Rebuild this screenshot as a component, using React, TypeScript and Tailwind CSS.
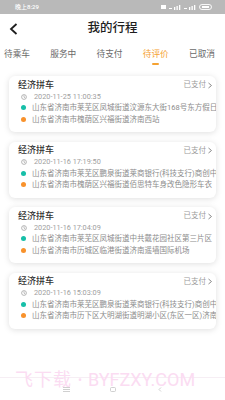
import React from "react";

const trips = [
  {
    time: "2020-11-25 11:00:35",
    from: "山东省济南市莱芜区凤城街道汶源东大街168号东方假日",
    to: "山东省济南市槐荫区兴福街道济南西站",
  },
  {
    time: "2020-11-16 17:19:50",
    from: "山东省济南市莱芜区鹏泉街道莱商银行(科技支行)商创中",
    to: "山东省济南市槐荫区兴福街道佰思特车身改色隐形车衣",
  },
  {
    time: "2020-11-16 17:04:09",
    from: "山东省济南市莱芜区凤城街道中共戴花园社区第三片区",
    to: "山东省济南市历城区临港街道济南遥墙国际机场",
  },
  {
    time: "2020-11-16 15:03:09",
    from: "山东省济南市莱芜区鹏泉街道莱商银行(科技支行)商创中",
    to: "山东省济南市历下区大明湖街道明湖小区(东区一区)济南",
  },
];

const tabs = ["待乘车", "服务中", "待支付", "待评价", "已取消"];

function Clock() {
  return (
    <svg width="6" height="6" viewBox="0 0 12 12" className="shrink-0">
      <circle cx="6" cy="6" r="4.8" fill="none" stroke="#9a9a9a" strokeWidth="1.4" />
      <path d="M6 3.4V6.2L7.8 7.4" fill="none" stroke="#9a9a9a" strokeWidth="1.3" strokeLinecap="round" />
    </svg>
  );
}

function Card({ t }: { t: (typeof trips)[number] }) {
  return (
    <div className="h-[56px] w-[207px] shrink-0 overflow-hidden rounded-[6px] bg-white pt-[3px] shadow-[0_1px_6px_rgba(0,0,0,0.13)]">
      <div className="flex h-[12px] items-center justify-between pl-[9px] pr-[3px]">
        <span className="text-[9px] font-medium leading-none text-[#333333]">经济拼车</span>
        <span className="flex items-center text-[7.5px] leading-none text-[#9b9b9b]">
          已支付
          <svg width="6" height="7" viewBox="0 0 6 7" className="ml-[1px]">
            <path d="M1.5 1L4.5 3.5L1.5 6" fill="none" stroke="#8a8a8a" strokeWidth="1" />
          </svg>
        </span>
      </div>
      <div className="flex h-[11px] items-center pl-[12px]">
        <Clock />
        <span className="ml-[7px] whitespace-nowrap text-[7.3px] leading-none text-[#a0a0a0]">{t.time}</span>
      </div>
      <div className="flex h-[11.5px] items-center pl-[12px]">
        <span className="h-[5px] w-[5px] shrink-0 rounded-full bg-[#17bfa8]" />
        <span className="ml-[6px] whitespace-nowrap text-[7.5px] leading-none text-[#8c8c8c]">{t.from}</span>
      </div>
      <div className="flex h-[11.5px] items-center pl-[12px]">
        <span className="h-[5px] w-[5px] shrink-0 rounded-full bg-[#f8922c]" />
        <span className="ml-[6px] whitespace-nowrap text-[7.5px] leading-none text-[#8c8c8c]">{t.to}</span>
      </div>
    </div>
  );
}

export default function App() {
  return (
    <div
      className="relative h-[400px] w-[225px] overflow-hidden bg-white"
      style={{ fontFamily: 'Roboto, "Noto Sans CJK SC", sans-serif' }}
    >
      {/* status bar */}
      <div className="flex h-[14px] items-center justify-between bg-[#b9b9b9] pl-[15px] pr-[12px]">
        <span className="text-[6px] font-medium leading-none text-white">晚上8:29</span>
        <div className="flex items-center gap-[3px]">
          <svg width="5" height="4" viewBox="0 0 5 4"><rect width="5" height="4" fill="#fff" /></svg>
          <svg width="12" height="5" viewBox="0 0 12 5">
            <rect x="0" y="3" width="3" height="1" fill="#fff" />
            <rect x="5" y="2" width="1.3" height="3" fill="#fff" />
            <rect x="7.5" y="1" width="1.3" height="4" fill="#fff" />
            <rect x="10" y="0" width="1.3" height="5" fill="#fff" />
          </svg>
          <svg width="12" height="5" viewBox="0 0 12 5">
            <rect x="0" y="3" width="3" height="1" fill="#fff" />
            <rect x="5" y="2" width="1.3" height="3" fill="#fff" />
            <rect x="7.5" y="1" width="1.3" height="4" fill="#fff" />
            <rect x="10" y="0" width="1.3" height="5" fill="#fff" />
          </svg>
          <svg width="14" height="6" viewBox="0 0 14 6">
            <rect x="0.5" y="0.5" width="12" height="5" rx="2.5" fill="none" stroke="#fff" strokeWidth="0.9" />
            <rect x="3" y="2" width="7" height="2" fill="#fff" />
          </svg>
        </div>
      </div>

      {/* header */}
      <div className="relative flex h-[28px] items-center justify-center">
        <svg width="10" height="12" viewBox="0 0 10 12" className="absolute left-[9px] top-[9px]">
          <path d="M7.5 1L2 6L7.5 11" fill="none" stroke="#1e1e1e" strokeWidth="1.8" />
        </svg>
        <span className="text-[12.5px] font-medium leading-none text-[#1e1e1e]">我的行程</span>
      </div>

      {/* tabs */}
      <div className="flex h-[26px] items-start justify-between pl-[4px] pr-[10px] pt-[7px]">
        {tabs.map((tab, i) => (
          <div key={tab} className="flex w-[26px] flex-col items-center">
            <span
              className={
                i === 3
                  ? "whitespace-nowrap text-[8.7px] leading-[10px] text-[#f5a232]"
                  : "whitespace-nowrap text-[8.7px] leading-[10px] text-[#6a6a6a]"
              }
            >
              {tab}
            </span>
            {i === 3 && <span className="mt-[4px] h-[2px] w-[7px] rounded-full bg-[#f5a232]" />}
          </div>
        ))}
      </div>

      {/* cards */}
      <div className="mt-[8px] flex flex-col gap-[9.5px] pl-[9px]">
        {trips.map((t) => (
          <Card key={t.time} t={t} />
        ))}
      </div>

      {/* watermark */}
      <div className="absolute left-0 top-[377px] h-px w-full bg-[#f6eef4]" />
      <div className="absolute left-[15px] top-[369px] flex items-center whitespace-nowrap text-[18px] leading-[22px] text-[#fbdcf2]">
        <span className="tracking-[1px]">飞下载</span>
        <span className="mx-[6px] text-[12px]">•</span>
        <span>BYFZXY.COM</span>
      </div>

      {/* nav bar */}
      <div className="absolute bottom-[8px] left-0 flex w-full items-center justify-center">
        <svg width="7" height="5" viewBox="0 0 7 5" className="mr-[40px]">
          <path d="M0 0.5H7M0 2.5H7M0 4.5H7" stroke="#c4c4c4" strokeWidth="0.8" />
        </svg>
        <svg width="6" height="5" viewBox="0 0 6 5" className="mr-[42px]">
          <rect x="0.5" y="0.5" width="5" height="4" rx="1" fill="none" stroke="#c4c4c4" strokeWidth="0.8" />
        </svg>
        <svg width="4" height="5" viewBox="0 0 4 5">
          <path d="M3 0.5L1 2.5L3 4.5" fill="none" stroke="#c4c4c4" strokeWidth="0.8" />
        </svg>
      </div>
    </div>
  );
}
